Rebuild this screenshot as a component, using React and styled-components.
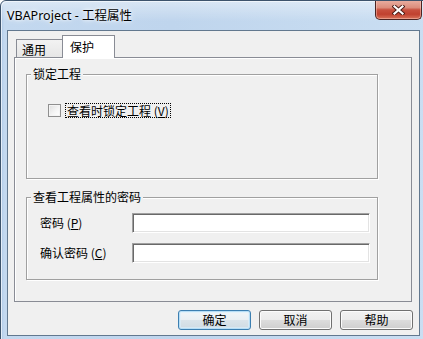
import React from "react";
import styled, { createGlobalStyle } from "styled-components";

const GlobalStyle = createGlobalStyle`
  html, body {
    margin: 0;
    padding: 0;
    overflow: hidden;
    background: #ffffff;
  }
  body {
    font-family: "Noto Sans CJK SC", "Noto Sans", sans-serif;
    font-size: 12px;
    color: #000;
  }
`;

export default function App() {
  return (
    <>
      <GlobalStyle />
      <Window>
        <TitleBar>
          <Title>VBAProject - 工程属性</Title>
          <CloseButton aria-label="关闭">
            <svg width="13" height="10" viewBox="0 0 13 10">
              <path d="M2.5 1.5 L10.5 8.5 M10.5 1.5 L2.5 8.5" stroke="#4a1a14" strokeWidth="4" strokeLinecap="square" fill="none" />
              <path d="M2.5 1.5 L10.5 8.5 M10.5 1.5 L2.5 8.5" stroke="#ffffff" strokeWidth="2.2" strokeLinecap="square" fill="none" />
            </svg>
          </CloseButton>
        </TitleBar>

        <Client>
          <TabStrip>
            <Tab>通用</Tab>
            <Tab $active>保护</Tab>
          </TabStrip>

          <TabPanel>
            <GroupFrame $top={16} $height={105}>
              <Caption>锁定工程</Caption>
              <CheckRow>
                <CheckBox />
                <CheckLabel>
                  查看时锁定工程 (<u>V</u>)
                </CheckLabel>
              </CheckRow>
            </GroupFrame>

            <GroupFrame $top={18} $height={83}>
              <Caption>查看工程属性的密码</Caption>
              <Fields>
                <FieldRow>
                  <FieldLabel>
                    密码 (<u>P</u>)
                  </FieldLabel>
                  <TextBox type="password" />
                </FieldRow>
                <FieldRow>
                  <FieldLabel>
                    确认密码 (<u>C</u>)
                  </FieldLabel>
                  <TextBox type="password" />
                </FieldRow>
              </Fields>
            </GroupFrame>
          </TabPanel>

          <ButtonRow>
            <Button $default>确定</Button>
            <Button>取消</Button>
            <Button>帮助</Button>
          </ButtonRow>
        </Client>
      </Window>
    </>
  );
}

const Window = styled.div`
  box-sizing: border-box;
  width: 430px;
  height: 346px;
  border: 1px solid #3d536c;
  border-radius: 6px 6px 0 0;
  background: linear-gradient(90deg, #a9c5e6 0px, #c3d8ef 3px, #bfd5ed 40%, #cadef2 100%);
  box-shadow: inset 1px 1px 0 #e4eef9;
  display: flex;
  flex-direction: column;
  overflow: hidden;
`;

const TitleBar = styled.div`
  height: 29px;
  display: flex;
  align-items: flex-start;
  padding-left: 6px;
  background: linear-gradient(180deg, rgba(255, 255, 255, 0.4), rgba(255, 255, 255, 0) 70%);
`;

const Title = styled.div`
  margin-top: 7px;
  font-family: "Noto Sans", "Noto Sans CJK SC", sans-serif;
  font-size: 12.5px;
  line-height: 16px;
  color: #000;
  text-shadow: 0 0 6px #ffffff, 0 0 3px #ffffff;
`;

const CloseButton = styled.button`
  box-sizing: border-box;
  margin: -1px 7px 0 auto;
  width: 47px;
  height: 20px;
  padding: 0;
  display: flex;
  align-items: center;
  justify-content: center;
  border: 1px solid #4b2422;
  border-top: none;
  border-radius: 0 0 5px 5px;
  background: linear-gradient(180deg, #eab0a3 0%, #dc8d7c 40%, #c8503e 52%, #c0412f 75%, #d9735a 100%);
  box-shadow: inset 0 0 0 1px rgba(255, 210, 200, 0.45);
  cursor: default;
`;

const Client = styled.div`
  box-sizing: border-box;
  width: 413px;
  height: 306px;
  margin-left: 6px;
  border: 1px solid #62788f;
  background: #f0f0f0;
  padding: 4px 6px 0 6px;
  display: flex;
  flex-direction: column;
`;

const TabStrip = styled.div`
  display: flex;
  align-items: flex-end;
  height: 23px;
  padding-left: 2px;
  margin-bottom: -1px;
  position: relative;
  z-index: 1;
`;

const Tab = styled.div`
  box-sizing: border-box;
  border: 1px solid #898c95;
  border-bottom: none;
  font-size: 12px;
  color: #000;
  ${({ $active }) =>
    $active
      ? `
    width: 53px;
    height: 23px;
    margin-left: -1px;
    padding: 3px 0 0 7px;
    line-height: 16px;
    background: #ffffff;
  `
      : `
    width: 47px;
    height: 18px;
    margin-bottom: 1px;
    padding: 2px 0 0 5px;
    line-height: 16px;
    background: linear-gradient(180deg, #f2f2f2, #e6e6e6);
  `}
`;

const TabPanel = styled.div`
  box-sizing: border-box;
  width: 398px;
  height: 245px;
  border: 1px solid #898c95;
  background: #f0f0f0;
  box-shadow: inset 1px 1px 0 #ffffff;
  padding-left: 11px;
  display: flex;
  flex-direction: column;
`;

const GroupFrame = styled.div`
  box-sizing: border-box;
  position: relative;
  width: 352px;
  height: ${({ $height }) => $height}px;
  margin-top: ${({ $top }) => $top}px;
  border: 1px solid #a0a0a0;
  box-shadow: inset 1px 1px 0 #ffffff, 1px 1px 0 #ffffff;
`;

const Caption = styled.span`
  position: absolute;
  top: -8px;
  left: 4px;
  padding: 0 2px;
  line-height: 14px;
  font-size: 12px;
  background: #f0f0f0;
`;

const CheckRow = styled.div`
  display: flex;
  align-items: center;
  padding: 28px 0 0 21px;
`;

const CheckBox = styled.span`
  box-sizing: border-box;
  width: 13px;
  height: 13px;
  margin-right: 4px;
  border: 1px solid #8f8f8f;
  background: linear-gradient(135deg, #dedede 0%, #f6f6f6 60%, #ffffff 100%);
  box-shadow: inset 0 0 0 1px #f4f4f4;
`;

const CheckLabel = styled.span`
  border: 1px dotted #000;
  padding: 0 1px;
  line-height: 13px;
  font-size: 12px;
`;

const Fields = styled.div`
  display: flex;
  flex-direction: column;
  gap: 10px;
  padding: 15px 7px 0 13px;
`;

const FieldRow = styled.div`
  display: flex;
  align-items: center;
`;

const FieldLabel = styled.span`
  width: 92px;
  font-size: 12px;
  line-height: 14px;
`;

const TextBox = styled.input`
  box-sizing: border-box;
  width: 238px;
  height: 20px;
  margin: 0;
  padding: 0 3px;
  border: 1px solid;
  border-color: #a0a0a0 #ffffff #ffffff #a0a0a0;
  box-shadow: inset 1px 1px 0 #696969, inset -1px -1px 0 #e3e3e3;
  background: #ffffff;
  outline: none;
  font-family: "Noto Sans CJK SC", sans-serif;
  font-size: 12px;
`;

const ButtonRow = styled.div`
  display: flex;
  justify-content: flex-end;
  gap: 8px;
  margin-top: 8px;
`;

const Button = styled.button`
  box-sizing: border-box;
  width: 73px;
  height: 20px;
  padding: 0;
  border-radius: 3px;
  font-family: "Noto Sans CJK SC", sans-serif;
  font-size: 12px;
  line-height: 16px;
  color: #000;
  cursor: default;
  border: 1px solid ${({ $default }) => ($default ? "#3c7fb1" : "#707070")};
  background: ${({ $default }) =>
    $default
      ? "linear-gradient(180deg, #f1f6f9 0%, #e9eff3 50%, #dbe4ea 50%, #cfdbe3 100%)"
      : "linear-gradient(180deg, #f2f2f2 0%, #ebebeb 50%, #dddddd 50%, #cfcfcf 100%)"};
  box-shadow: ${({ $default }) =>
    $default ? "inset 0 0 0 1px #b7def6, inset 0 0 0 2px rgba(220,240,252,0.6)" : "inset 0 0 0 1px #fcfcfc"};
`;
